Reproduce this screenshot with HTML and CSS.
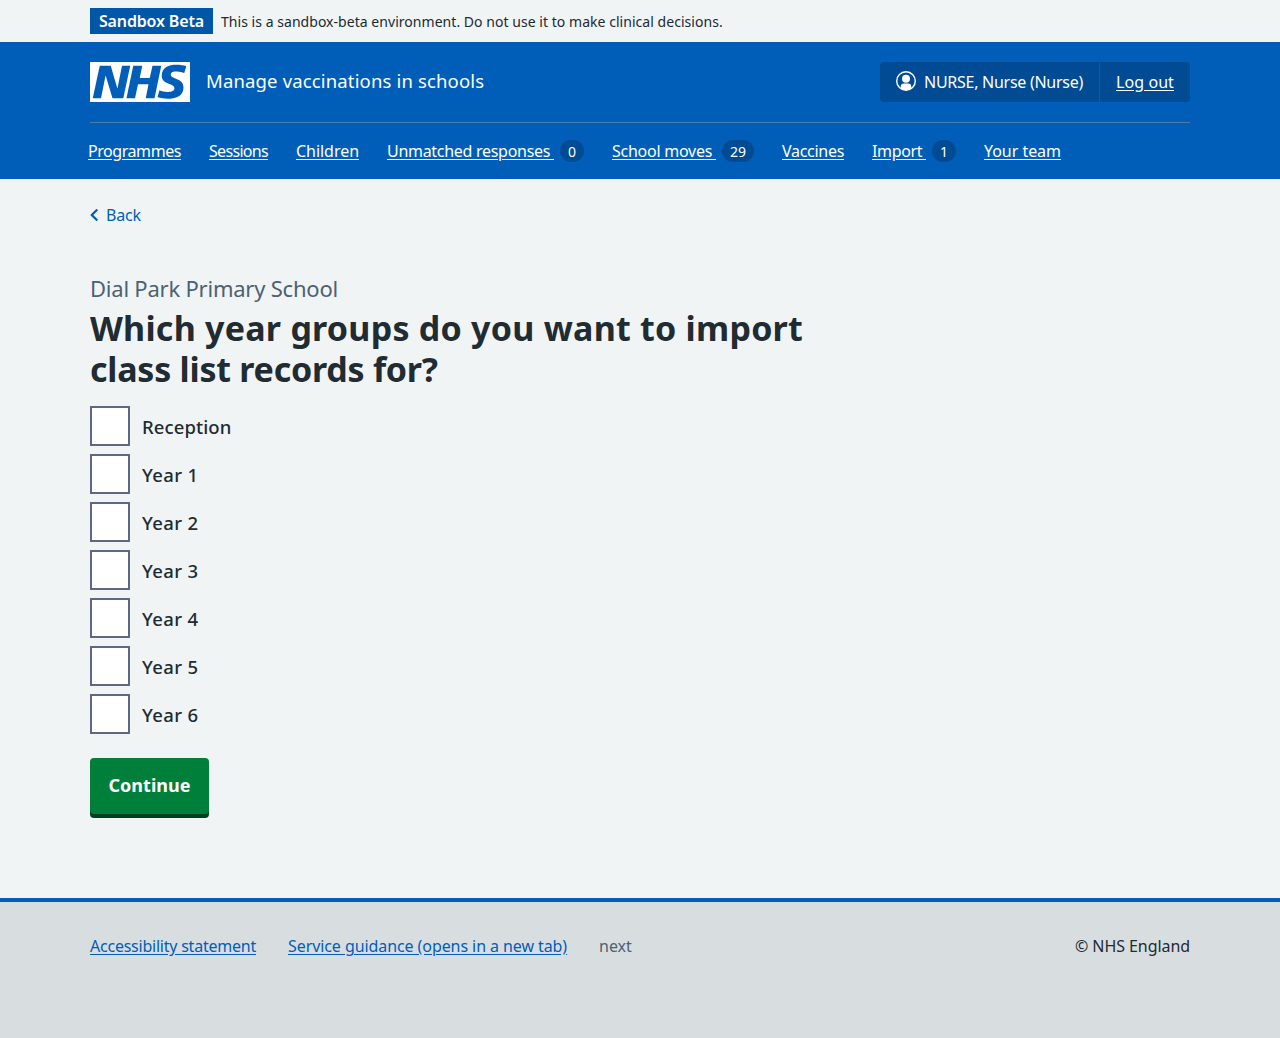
FILE: index.html
```
<!DOCTYPE html>
<html lang="en">
<head>
<meta charset="utf-8">
<title>Which year groups do you want to import class list records for? – Manage vaccinations in schools</title>
<link rel="stylesheet" href="styles.css">
</head>
<body>
<div class="environment">
  <div class="container environment-row">
    <strong class="tag">Sandbox Beta</strong>
    <span class="environment-text">This is a sandbox-beta environment. Do not use it to make clinical decisions.</span>
  </div>
</div>
<header class="header">
  <div class="container">
    <div class="header-top">
      <a class="service" href="#">
        <svg class="logo" viewBox="0 0 200 80" width="100" height="40" role="img" aria-label="NHS"><path fill="#fff" d="M200 0v80H0V0h200Zm-27.5 5.5c-14.5 0-29 5-29 22 0 10.2 7.7 13.5 14.7 16.3l.7.3c5.4 2 10.1 3.9 10.1 8.4 0 6.5-8.5 7.5-14 7.5s-12.5-1.5-16-3.5L135 70c5.5 2 13.5 3.5 20 3.5 15.5 0 32-4.5 32-22.5 0-19.5-25.5-16.5-25.5-25.5 0-5.5 5.5-6.5 12.5-6.5a35 35 0 0 1 14.5 3l4-13.5c-4.5-2-12-3-20-3Zm-131 2h-22l-14 65H22l9-45h.5l13.5 45h21.5l14-65H64l-9 45h-.5l-13-45Zm63 0h-18l-13.5 65h17l6-28H117l-5.5 28H129l13.5-65H125L119.5 32h-20l5-24.5Z"/></svg>
        <span class="service-name">Manage vaccinations in schools</span>
      </a>
      <div class="account">
        <span class="account-item">
          <svg class="user-icon" viewBox="0 0 20 20" width="20" height="20" aria-hidden="true"><circle cx="10" cy="10" r="9.3" fill="none" stroke="#fff" stroke-width="1.4"/><circle cx="10" cy="7.8" r="4" fill="#fff"/><path fill="#fff" d="M4.7 17.6v-1.9a3.2 3.2 0 0 1 3.2-3.2h4.2a3.2 3.2 0 0 1 3.2 3.2v1.9A9.3 9.3 0 0 1 10 19.3a9.3 9.3 0 0 1-5.3-1.7Z"/></svg>
          <span class="account-name">NURSE, Nurse (Nurse)</span>
        </span>
        <a class="account-item account-link" href="#">Log out</a>
      </div>
    </div>
    <nav class="nav">
      <a href="#" class="nav-programmes"><span class="nav-label">Programmes</span></a>
      <a href="#" class="nav-sessions"><span class="nav-label">Sessions</span></a>
      <a href="#" class="nav-children"><span class="nav-label">Children</span></a>
      <a href="#" class="nav-responses"><span class="nav-label">Unmatched responses&nbsp;</span><span class="count">0</span></a>
      <a href="#" class="nav-moves"><span class="nav-label">School moves&nbsp;</span><span class="count">29</span></a>
      <a href="#" class="nav-vaccines"><span class="nav-label">Vaccines</span></a>
      <a href="#" class="nav-import"><span class="nav-label">Import&nbsp;</span><span class="count">1</span></a>
      <a href="#" class="nav-team"><span class="nav-label">Your team</span></a>
    </nav>
  </div>
</header>
<div class="container page">
  <a class="back" href="#">
    <svg viewBox="0 0 8 12" width="8" height="12" aria-hidden="true"><path d="M6.6 1.2 1.7 6l4.9 4.8" fill="none" stroke="#005eb8" stroke-width="2.3" stroke-linecap="round" stroke-linejoin="round"/></svg>
    <span>Back</span>
  </a>
  <main>
    <form>
      <span class="caption">Dial Park Primary School</span>
      <h1 class="heading">Which year groups do you want to import <span class="heading-end">class list records for?</span></h1>
      <div class="checkboxes">
        <label class="checkbox"><input type="checkbox"><span class="reception">Reception</span></label>
        <label class="checkbox"><input type="checkbox"><span class="year">Year 1</span></label>
        <label class="checkbox"><input type="checkbox"><span class="year">Year 2</span></label>
        <label class="checkbox"><input type="checkbox"><span class="year">Year 3</span></label>
        <label class="checkbox"><input type="checkbox"><span class="year">Year 4</span></label>
        <label class="checkbox"><input type="checkbox"><span class="year">Year 5</span></label>
        <label class="checkbox"><input type="checkbox"><span class="year">Year 6</span></label>
      </div>
      <button class="button" type="button">Continue</button>
    </form>
  </main>
</div>
<footer class="footer">
  <div class="container footer-row">
    <a href="#" class="footer-accessibility">Accessibility statement</a>
    <a href="#" class="footer-guidance">Service guidance (opens in a new tab)</a>
    <span class="release">next</span>
    <span class="copyright">© NHS England</span>
  </div>
</footer>
</body>
</html>
```
FILE: styles.css
```
* { box-sizing: border-box; }

body {
  margin: 0;
  min-height: 100vh;
  display: flex;
  flex-direction: column;
  background: #f0f4f5;
  color: #212b32;
  font: 400 16px/24px "Noto Sans", "Open Sans", sans-serif;
}

.container { width: 1100px; margin: 0 auto; }

.environment-row {
  display: flex;
  align-items: center;
  gap: 8px;
  height: 42px;
}
.tag {
  width: 123px;
  height: 26px;
  background: #0056a7;
  color: #fff;
  font-weight: 600;
  line-height: 26px;
  text-align: center;
  letter-spacing: -0.15px;
}
.environment-text {
  padding-top: 2px;
  font-size: 14px;
  letter-spacing: 0.04px;
  white-space: nowrap;
}

.header { background: #005eb8; color: #fff; }
.header a { color: #fff; }
.header-top {
  display: flex;
  justify-content: space-between;
  align-items: center;
  height: 81px;
  padding-bottom: 1px;
  border-bottom: 1px solid #4d7ea8;
}
.service { display: flex; align-items: center; gap: 16px; text-decoration: none; }
.logo { display: block; }
.service-name {
  padding-bottom: 2px;
  font-size: 18.5px;
  letter-spacing: 0.15px;
}

.account {
  display: flex;
  height: 40px;
  border-radius: 4px;
  background: #004b93;
}
.account-item { display: flex; align-items: center; gap: 8px; padding: 0 16px; }
.user-icon { margin-bottom: 2px; }
.account-name { letter-spacing: -0.27px; white-space: nowrap; }
.account-link { width: 91px; border-left: 1px solid #005eb8; letter-spacing: 0.08px; text-underline-offset: 2px; }

.nav {
  display: flex;
  gap: 28px;
  height: 56px;
  margin-left: -2px;
  line-height: 56px;
  white-space: nowrap;
}
.nav a { display: flex; align-items: center; text-decoration: none; }
.nav-label { text-decoration: underline; text-underline-offset: 2px; }
.nav-programmes { width: 93px; letter-spacing: -0.44px; }
.nav-sessions { width: 59px; letter-spacing: -0.69px; }
.nav-children { width: 63px; letter-spacing: -0.04px; }
.nav-responses { width: 197px; letter-spacing: -0.29px; }
.nav-moves { width: 142px; letter-spacing: -0.25px; }
.nav-vaccines { width: 62px; letter-spacing: -0.29px; }
.nav-import { width: 84px; letter-spacing: -0.35px; }
.nav-team { letter-spacing: -0.04px; }
.count {
  min-width: 24px;
  height: 22px;
  margin-left: auto;
  padding: 0 8px;
  border-radius: 11px;
  background: #004b93;
  font-size: 14px;
  line-height: 23px;
  text-align: center;
  letter-spacing: 0;
}

.page { flex: 1; }
.back {
  display: inline-flex;
  align-items: center;
  gap: 8px;
  margin-top: 24px;
  color: #005eb8;
  text-decoration: none;
  letter-spacing: -0.15px;
}
main { padding-top: 45px; }
.caption {
  display: block;
  color: #4c6272;
  font-size: 22px;
  line-height: 33px;
  letter-spacing: -0.22px;
}
.heading {
  max-width: 733px;
  margin: 3px 0 16px;
  font-size: 34px;
  font-weight: 700;
  line-height: 41px;
  letter-spacing: 0.24px;
}
.heading-end { display: block; letter-spacing: -0.24px; }

.checkboxes { display: flex; flex-direction: column; gap: 8px; }
.checkbox {
  display: flex;
  align-items: center;
  gap: 12px;
  height: 40px;
  font-size: 18.5px;
  font-weight: 500;
}
.checkbox span { padding-top: 2px; }
.checkbox input {
  appearance: none;
  width: 40px;
  height: 40px;
  margin: 0;
  border: 2px solid #5f6880;
  background: #fff;
}
.checkbox .reception { letter-spacing: 0.1px; }
.checkbox .year { letter-spacing: 0.35px; }

.button {
  display: block;
  width: 119px;
  height: 56px;
  margin-top: 24px;
  padding: 0 0 2px;
  border: 0;
  border-radius: 4px;
  background: #007f3b;
  box-shadow: 0 4px 0 #00401e;
  color: #fff;
  font: 700 18px/54px "Noto Sans", "Open Sans", sans-serif;
}

.footer { height: 140px; border-top: 4px solid #005eb8; background: #d8dde0; }
.footer-row { display: flex; gap: 32px; padding-top: 32px; white-space: nowrap; }
.footer a { color: #005eb8; text-underline-offset: 2px; }
.footer-accessibility { width: 166px; letter-spacing: -0.23px; }
.footer-guidance { width: 279px; letter-spacing: -0.08px; }
.release { color: #4c6272; }
.copyright { margin-left: auto; letter-spacing: -0.07px; }
```
